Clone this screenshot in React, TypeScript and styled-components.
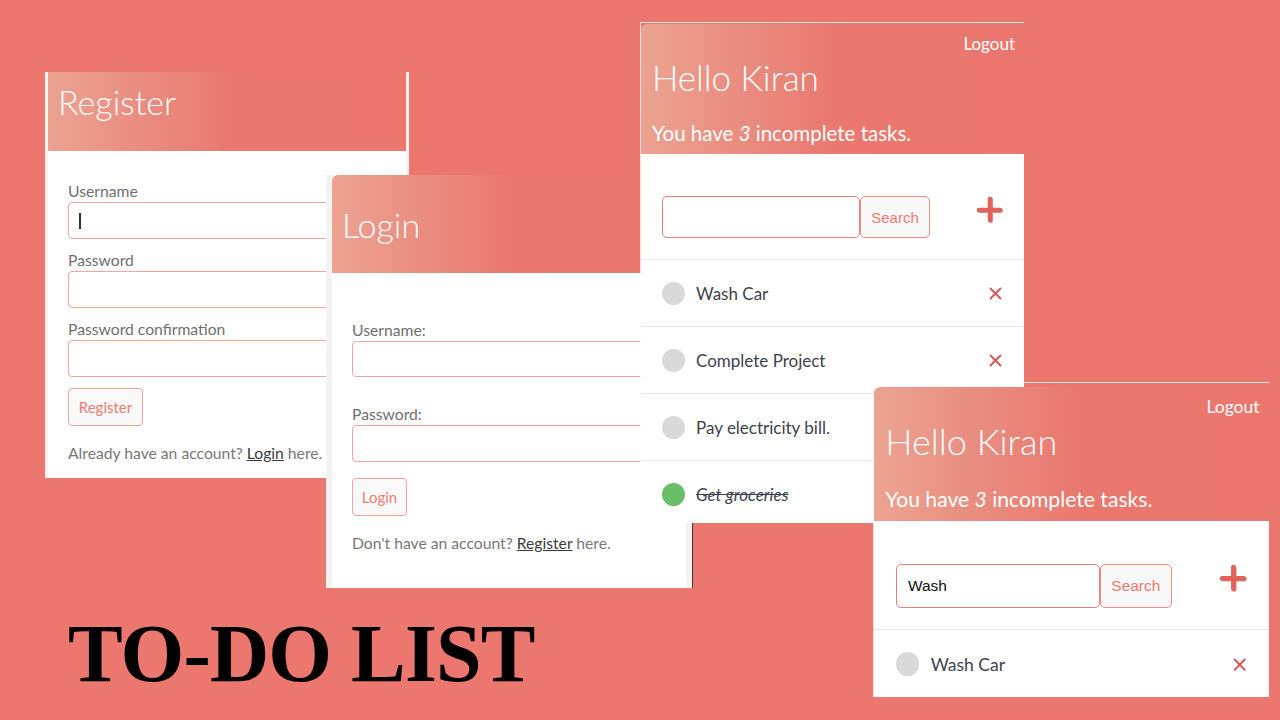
import React from "react";
import styled, { createGlobalStyle } from "styled-components";

const Global = createGlobalStyle`
  html, body { margin: 0; padding: 0; }
  body { background: #ec776e; font-family: Lato, "Open Sans", sans-serif; }
  * { box-sizing: border-box; }
`;

const Canvas = styled.div`
  position: relative;
  width: 1280px;
  height: 720px;
  overflow: hidden;
  background: #ec776e;
`;

/* a screenshot placed on the collage canvas */
const Shot = styled.div<{ $x: number; $y: number; $w: number; $h: number }>`
  position: absolute;
  left: ${(p) => p.$x}px;
  top: ${(p) => p.$y}px;
  width: ${(p) => p.$w}px;
  height: ${(p) => p.$h}px;
  overflow: hidden;
  display: flex;
  flex-direction: column;
`;

const RegisterShot = styled(Shot)`
  border-left: 3px solid #f2f2f2;
  border-right: 3px solid #f4f4f4;
  background: #fff;
`;

const LoginShot = styled(Shot)`
  background: #f3f3f3;
  padding: 0 6px;
  border-right: 1px solid #3a3a3a;
`;

const TaskShot = styled(Shot)<{ $gap: number }>`
  border-top: 1px solid rgba(255, 255, 255, 0.85);
  border-left: 1px solid rgba(255, 255, 255, 0.75);
  padding-top: ${(p) => p.$gap}px;
`;

const Scaled = styled.div<{ $zoom: number }>`
  zoom: ${(p) => p.$zoom};
  width: 383px;
  display: flex;
  flex-direction: column;
`;

const Column = styled.div`
  flex: 1;
  display: flex;
  flex-direction: column;
  background: #fff;
`;

const Banner = styled.div<{ $h: number; $round?: boolean }>`
  flex: none;
  height: ${(p) => p.$h}px;
  background: linear-gradient(90deg, #eca391 0%, #e98b7f 28%, #ea786e 52%, #eb776e 100%);
  border-top-left-radius: ${(p) => (p.$round ? 6 : 0)}px;
  color: #fff;
  display: flex;
  flex-direction: column;
`;

const PageTitle = styled.h1<{ $top: number }>`
  margin: 0;
  padding: ${(p) => p.$top}px 0 0 10px;
  font-family: Lato, "Open Sans", sans-serif;
  font-weight: 300;
  font-size: 34px;
  line-height: 38px;
  color: #fff;
`;

const Form = styled.div<{ $top: number }>`
  display: flex;
  flex-direction: column;
  padding: ${(p) => p.$top}px 20px 0 20px;
  background: #fff;
  flex: 1;
`;

const Label = styled.div`
  font-family: Lato, "Open Sans", sans-serif;
  font-size: 15.7px;
  line-height: 20px;
  color: #6f6f6f;
  margin-bottom: 1px;
`;

const Field = styled.div<{ $after: number }>`
  display: flex;
  flex-direction: column;
  margin-bottom: ${(p) => p.$after}px;
`;

const InputBox = styled.div<{ $h: number }>`
  height: ${(p) => p.$h}px;
  width: 100%;
  border: 1px solid #f2a49d;
  border-radius: 4px;
  background: #fff;
  display: flex;
  align-items: center;
  padding-left: 10px;
`;

const Caret = styled.span`
  width: 1.5px;
  height: 16px;
  background: #333;
`;

const PinkButton = styled.button<{ $w: number }>`
  width: ${(p) => p.$w}px;
  height: 38px;
  padding: 0;
  border: 1px solid #f2a49d;
  border-radius: 4px;
  background: #f9f9f9;
  color: #ee7b72;
  font-family: Lato, "Open Sans", sans-serif;
  font-size: 15px;
`;

const Footnote = styled.p`
  margin: 17px 0 0;
  font-family: Lato, "Open Sans", sans-serif;
  font-size: 15.7px;
  line-height: 20px;
  color: #787878;
  white-space: nowrap;
`;

const TextLink = styled.a`
  color: #3a3a3a;
  text-decoration: underline;
`;

/* task app */
const TaskHead = styled(Banner)`
  padding: 10px 9px 9px 11px;
`;

const Logout = styled.span`
  align-self: flex-end;
  font-family: Lato, "Open Sans", sans-serif;
  font-size: 17px;
  line-height: 20px;
  font-weight: 400;
`;

const Greeting = styled.div`
  margin-top: 3px;
  font-family: Lato, "Open Sans", sans-serif;
  font-weight: 300;
  font-size: 35px;
  line-height: 40px;
`;

const Count = styled.div`
  margin-top: auto;
  font-family: Lato, "Open Sans", sans-serif;
  font-weight: 400;
  font-size: 20.5px;
  line-height: 24px;
  em {
    font-style: italic;
  }
`;

const SearchRow = styled.div`
  display: flex;
  align-items: flex-start;
  padding: 42px 20px 21px 21px;
  border-bottom: 1px solid #e7e7ec;
  background: #fff;
`;

const SearchBox = styled.div`
  width: 198px;
  height: 42px;
  border: 1px solid #ea7d75;
  border-radius: 5px;
  display: flex;
  align-items: center;
  padding-left: 11px;
  font-family: "Liberation Sans", Arial, sans-serif;
  font-size: 15px;
  color: #111;
`;

const SearchButton = styled.button`
  width: 70px;
  height: 42px;
  padding: 0;
  border: 1px solid #ec8d86;
  border-radius: 5px;
  background: #f8f8f8;
  color: #ee7870;
  font-family: "Liberation Sans", Arial, sans-serif;
  font-size: 15px;
`;

const AddButton = styled.span`
  margin-left: auto;
  display: flex;
`;

const TaskRow = styled.div`
  height: 67px;
  flex: none;
  display: flex;
  align-items: center;
  padding: 0 21px;
  border-bottom: 1px solid #e7e7ec;
  background: #fff;
`;

const Dot = styled.span<{ $done?: boolean }>`
  width: 23px;
  height: 23px;
  border-radius: 50%;
  background: ${(p) => (p.$done ? "#68bf68" : "#d9d9d9")};
  margin-right: 11px;
  flex: none;
`;

const TaskName = styled.span<{ $done?: boolean }>`
  flex: 1;
  font-family: Lato, "Open Sans", sans-serif;
  font-size: 17px;
  color: #3d434c;
  font-style: ${(p) => (p.$done ? "italic" : "normal")};
  text-decoration: ${(p) => (p.$done ? "line-through" : "none")};
`;

const RemoveIcon = styled.svg`
  flex: none;
  margin-right: 1px;
`;

const BigTitle = styled.h2`
  position: absolute;
  left: 68px;
  top: 613px;
  margin: 0;
  font-family: "Liberation Serif", "Times New Roman", serif;
  font-weight: 700;
  font-size: 82px;
  line-height: 1;
  letter-spacing: -0.8px;
  color: #000;
  white-space: nowrap;
`;

const Plus = () => (
  <svg width="28" height="28" viewBox="0 0 28 28">
    <g stroke="#a94a44" strokeWidth="4.6" strokeLinecap="round" opacity="0.55">
      <path d="M14.8 3.8v21M3.8 14.8h21" />
    </g>
    <g stroke="#e2625a" strokeWidth="4.6" strokeLinecap="round">
      <path d="M14 3v21M3 14h21" />
    </g>
  </svg>
);

const Cross = () => (
  <RemoveIcon width="13" height="13" viewBox="0 0 13 13">
    <path d="M1 1L12 12M12 1L1 12" stroke="#d9534f" strokeWidth="1.8" />
  </RemoveIcon>
);

type Task = { title: string; done?: boolean };

function TaskApp({ tasks, query }: { tasks: Task[]; query?: string }) {
  return (
    <>
      <TaskHead $h={130} $round>
        <Logout>Logout</Logout>
        <Greeting>Hello Kiran</Greeting>
        <Count>
          You have <em>3</em> incomplete tasks.
        </Count>
      </TaskHead>
      <SearchRow>
        <SearchBox>{query}</SearchBox>
        <SearchButton>Search</SearchButton>
        <AddButton>
          <Plus />
        </AddButton>
      </SearchRow>
      {tasks.map((t) => (
        <TaskRow key={t.title}>
          <Dot $done={t.done} />
          <TaskName $done={t.done}>{t.title}</TaskName>
          {!t.done && <Cross />}
        </TaskRow>
      ))}
    </>
  );
}

export default function App() {
  return (
    <Canvas>
      <Global />

      <RegisterShot $x={45} $y={72} $w={364} $h={406}>
        <Banner $h={79}>
          <PageTitle $top={11}>Register</PageTitle>
        </Banner>
        <Form $top={30}>
          <Field $after={11}>
            <Label>Username</Label>
            <InputBox $h={37}>
              <Caret />
            </InputBox>
          </Field>
          <Field $after={11}>
            <Label>Password</Label>
            <InputBox $h={37} />
          </Field>
          <Field $after={11}>
            <Label>Password confirmation</Label>
            <InputBox $h={37} />
          </Field>
          <div>
            <PinkButton $w={75}>Register</PinkButton>
          </div>
          <Footnote>
            Already have an account? <TextLink>Login</TextLink> here.
          </Footnote>
        </Form>
      </RegisterShot>

      <LoginShot $x={326} $y={175} $w={367} $h={413}>
        <Column>
          <Banner $h={98} $round>
            <PageTitle $top={31}>Login</PageTitle>
          </Banner>
          <Form $top={47}>
            <Field $after={27}>
              <Label>Username:</Label>
              <InputBox $h={36} />
            </Field>
            <Field $after={16}>
              <Label>Password:</Label>
              <InputBox $h={37} />
            </Field>
            <div>
              <PinkButton $w={55}>Login</PinkButton>
            </div>
            <Footnote>
              Don't have an account? <TextLink>Register</TextLink> here.
            </Footnote>
          </Form>
        </Column>
      </LoginShot>

      <TaskShot $x={640} $y={22} $w={384} $h={501} $gap={1}>
        <Scaled $zoom={1}>
          <TaskApp
            tasks={[
              { title: "Wash Car" },
              { title: "Complete Project" },
              { title: "Pay electricity bill." },
              { title: "Get groceries", done: true },
            ]}
          />
        </Scaled>
      </TaskShot>

      <TaskShot $x={873} $y={382} $w={396} $h={315} $gap={4}>
        <Scaled $zoom={1.031}>
          <TaskApp query="Wash" tasks={[{ title: "Wash Car" }]} />
        </Scaled>
      </TaskShot>

      <BigTitle>TO-DO LIST</BigTitle>
    </Canvas>
  );
}
